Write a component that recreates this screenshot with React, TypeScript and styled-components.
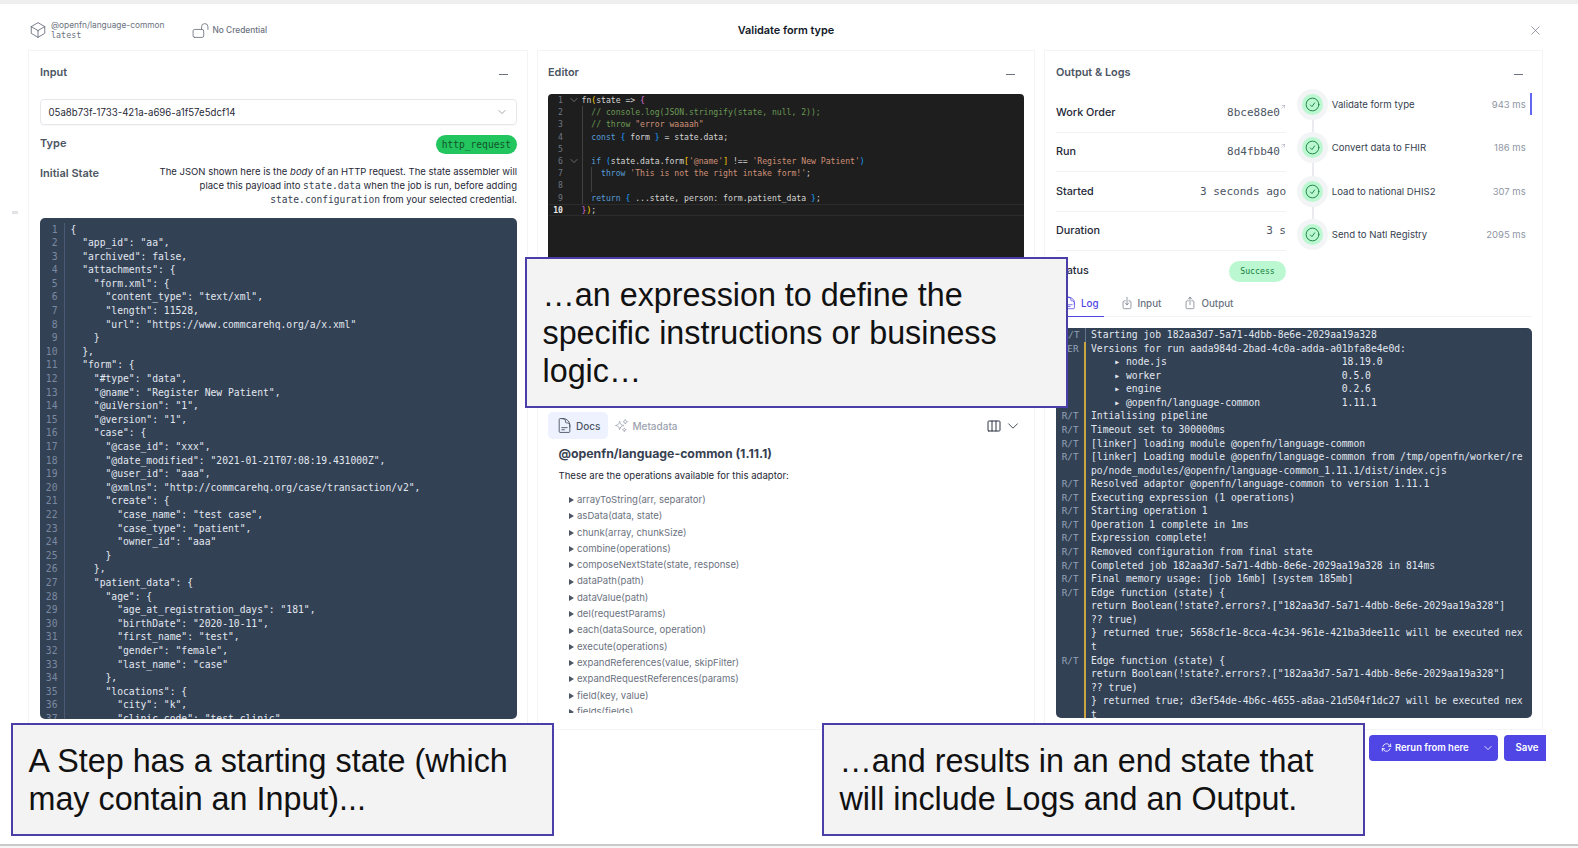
import React from "react";
import styled, { createGlobalStyle } from "styled-components";

const Global = createGlobalStyle`
  html, body { margin: 0; padding: 0; background: #fff; }
  body { font-family: Inter, "Noto Sans", sans-serif; color: #374151; overflow: hidden; }
  * { box-sizing: border-box; }
`;

const MONO = `"DejaVu Sans Mono", "Liberation Mono", monospace`;

const Page = styled.div`
  position: relative;
  width: 1578px;
  height: 848px;
  overflow: hidden;
  display: flex;
  flex-direction: column;
  background: #fff;
`;
const TopStrip = styled.div`
  height: 4px;
  flex: none;
  background: #eeeeee;
`;
const Header = styled.header`
  height: 46px;
  flex: none;
  display: grid;
  grid-template-columns: 1fr auto 1fr;
  align-items: center;
  padding: 6px 35px 0 29px;
`;
const HeaderLeft = styled.div`
  display: flex;
  align-items: center;
  gap: 27px;
`;
const HeaderGroup = styled.div`
  display: flex;
  align-items: center;
  gap: 4px;
  color: #6b7280;
`;
const AdaptorName = styled.div`
  font-size: 8.35px;
  line-height: 10px;
  color: #6b7280;
`;
const AdaptorVersion = styled.div`
  font-family: ${MONO};
  font-size: 8.4px;
  line-height: 10px;
  color: #6b7280;
`;
const CredentialText = styled.span`
  font-size: 8.35px;
  font-weight: 500;
  color: #6b7280;
`;
const Title = styled.h1`
  margin: 0;
  font-size: 10.9px;
  font-weight: 600;
  color: #111827;
`;
const CloseWrap = styled.div`
  justify-self: end;
  display: flex;
  color: #6b7280;
`;
const Svg = styled.svg`
  flex: none;
  display: block;
`;
const Hero = ({ d, size = 14, sw = 1.5 }: { d: string; size?: number; sw?: number }) => (
  <Svg width={size} height={size} viewBox="0 0 24 24" fill="none" stroke="currentColor" strokeWidth={sw} strokeLinecap="round" strokeLinejoin="round">
    <path d={d} />
  </Svg>
);
const I = {
  cube: "m21 7.5-9-5.25L3 7.5m18 0-9 5.25m9-5.25v9l-9 5.25M3 7.5l9 5.25M3 7.5v9l9 5.25m0-9v9",
  lock: "M13.5 10.5V6.75a4.5 4.5 0 1 1 9 0v3.75M3.75 21.75h10.5a2.25 2.25 0 0 0 2.25-2.25v-6.75a2.25 2.25 0 0 0-2.25-2.25H3.75a2.25 2.25 0 0 0-2.25 2.25v6.75a2.25 2.25 0 0 0 2.25 2.25Z",
  x: "M6 18 18 6M6 6l12 12",
  chev: "m19.5 8.25-7.5 7.5-7.5-7.5",
  doc: "M19.5 14.25v-2.625a3.375 3.375 0 0 0-3.375-3.375h-1.5A1.125 1.125 0 0 1 13.5 7.125v-1.5a3.375 3.375 0 0 0-3.375-3.375H8.25m0 12.75h7.5m-7.5 3H12M10.5 2.25H5.625c-.621 0-1.125.504-1.125 1.125v17.25c0 .621.504 1.125 1.125 1.125h12.75c.621 0 1.125-.504 1.125-1.125V11.25a9 9 0 0 0-9-9Z",
  sparkles: "M9.813 15.904 9 18.75l-.813-2.846a4.5 4.5 0 0 0-3.09-3.09L2.25 12l2.846-.813a4.5 4.5 0 0 0 3.09-3.09L9 5.25l.813 2.846a4.5 4.5 0 0 0 3.09 3.09L15.75 12l-2.846.813a4.5 4.5 0 0 0-3.09 3.09ZM18.259 8.715 18 9.75l-.259-1.035a3.375 3.375 0 0 0-2.455-2.456L14.25 6l1.036-.259a3.375 3.375 0 0 0 2.455-2.456L18 2.25l.259 1.035a3.375 3.375 0 0 0 2.456 2.456L21.75 6l-1.035.259a3.375 3.375 0 0 0-2.456 2.456ZM16.894 20.567 16.5 21.75l-.394-1.183a2.25 2.25 0 0 0-1.423-1.423L13.5 18.75l1.183-.394a2.25 2.25 0 0 0 1.423-1.423l.394-1.183.394 1.183a2.25 2.25 0 0 0 1.423 1.423l1.183.394-1.183.394a2.25 2.25 0 0 0-1.423 1.423Z",
  cols: "M9 4.5v15m6-15v15m-10.875 0h15.75c.621 0 1.125-.504 1.125-1.125V5.625c0-.621-.504-1.125-1.125-1.125H4.125C3.504 4.5 3 5.004 3 5.625v12.75c0 .621.504 1.125 1.125 1.125Z",
  check: "M9 12.75 11.25 15 15 9.75M21 12a9 9 0 1 1-18 0 9 9 0 0 1 18 0Z",
  refresh: "M16.023 9.348h4.992v-.001M2.985 19.644v-4.992m0 0h4.992m-4.993 0 3.181 3.183a8.25 8.25 0 0 0 13.803-3.7M4.031 9.865a8.25 8.25 0 0 1 13.803-3.7l3.181 3.182m0-4.991v4.99",
  into: "M9 8.25H7.5a2.25 2.25 0 0 0-2.25 2.25v9a2.25 2.25 0 0 0 2.25 2.25h9a2.25 2.25 0 0 0 2.25-2.25v-9a2.25 2.25 0 0 0-2.25-2.25H15M9 12l3 3m0 0 3-3m-3 3V2.25",
  out: "M9 8.25H7.5a2.25 2.25 0 0 0-2.25 2.25v9a2.25 2.25 0 0 0 2.25 2.25h9a2.25 2.25 0 0 0 2.25-2.25v-9a2.25 2.25 0 0 0-2.25-2.25H15m0-3-3-3m0 0-3 3m3-3V15",
  ext: "M6 18 18 6m0 0H8m10 0v10",
};

const Columns = styled.main`
  height: 679.5px;
  flex: none;
  margin: 0 35px 0 28px;
  display: grid;
  grid-template-columns: 500px 498px 499px;
  column-gap: 9px;
`;
const Panel = styled.section<{ $pl: number }>`
  min-width: 0;
  display: flex;
  flex-direction: column;
  border: 1px solid #f3f4f6;
  padding: 0 10px 0 ${(p) => p.$pl}px;
`;
const PanelHead = styled.div`
  height: 42px;
  flex: none;
  display: flex;
  align-items: center;
  justify-content: space-between;
  padding-right: 9px;
`;
const PanelTitle = styled.h2`
  margin: 0;
  font-size: 10.9px;
  font-weight: 600;
  color: #4b5563;
`;
const Collapse = styled.span`
  width: 9.5px;
  height: 1.3px;
  margin-top: 5px;
  background: #6b7280;
`;

const Select = styled.div`
  height: 26px;
  margin-top: 6px;
  flex: none;
  display: flex;
  align-items: center;
  justify-content: space-between;
  padding: 0 9px 0 7.5px;
  border: 1px solid #e5e7eb;
  border-radius: 4px;
  font-size: 9.65px;
  color: #1f2937;
  box-shadow: 0 1px 1px rgba(0, 0, 0, 0.03);
`;
const SelectChevron = styled.span`
  display: flex;
  color: #6b7280;
`;
const TypeRow = styled.div`
  margin-top: 10px;
  height: 19px;
  flex: none;
  display: flex;
  align-items: center;
  justify-content: space-between;
`;
const FieldLabel = styled.span`
  font-size: 11px;
  font-weight: 600;
  color: #4b5563;
`;
const TypeLabel = styled(FieldLabel)`
  margin-top: -3px;
`;
const TypePill = styled.span`
  height: 19px;
  padding: 0 6px;
  display: flex;
  align-items: center;
  border-radius: 10px;
  background: #22c55e;
  font-family: ${MONO};
  font-size: 9.6px;
  color: #14532d;
`;
const StateRow = styled.div`
  margin-top: 11px;
  flex: none;
  display: grid;
  grid-template-columns: 80px 1fr;
`;
const StateLabel = styled(FieldLabel)`
  line-height: 16px;
`;
const StateText = styled.p`
  margin: 0;
  text-align: right;
  white-space: nowrap;
  font-size: 9.5px;
  line-height: 14px;
  color: #1f2937;
`;
const InlineCode = styled.code`
  font-family: ${MONO};
  font-size: 9.6px;
  color: #374151;
`;

const JsonBlock = styled.div`
  margin-top: 11px;
  height: 500.5px;
  flex: none;
  overflow: hidden;
  border-radius: 5px;
  background: #334155;
  padding-top: 4.5px;
  font-family: ${MONO};
  font-size: 9.7px;
  color: #e2e8f0;
`;
const JsonRow = styled.div`
  display: flex;
  height: 13.6px;
  line-height: 13.6px;
`;
const JsonNum = styled.span`
  width: 24.5px;
  flex: none;
  text-align: right;
  padding-right: 6px;
  color: #7b8aa0;
  border-right: 1px solid #4b5b73;
`;
const JsonCode = styled.span`
  padding-left: 6px;
  white-space: pre;
`;

const EditorBlock = styled.div`
  margin-top: 1px;
  height: 306px;
  flex: none;
  overflow: hidden;
  border-radius: 4px 4px 0 0;
  background: #1e1e1e;
  font-family: ${MONO};
  font-size: 8.12px;
  color: #d4d4d4;
`;
const EdRow = styled.div<{ $current?: boolean }>`
  display: flex;
  height: 12.2px;
  line-height: 12.2px;
  box-shadow: ${(p) => (p.$current ? "inset 0 1px #2c2c2c, inset 0 -1px #2c2c2c" : "none")};
`;
const EdNum = styled.span<{ $current?: boolean }>`
  width: 15px;
  flex: none;
  text-align: right;
  color: ${(p) => (p.$current ? "#e8e8e8" : "#6e7681")};
  font-weight: ${(p) => (p.$current ? 700 : 400)};
`;
const EdFold = styled.span`
  width: 18.5px;
  flex: none;
  display: flex;
  align-items: center;
  padding-left: 6px;
  color: #9a9a9a;
`;
const EdCode = styled.span<{ $guides: number }>`
  flex: 1;
  white-space: pre;
  background-image: ${(p) =>
    p.$guides === 2
      ? "linear-gradient(#404040,#404040), linear-gradient(#404040,#404040)"
      : p.$guides === 1
        ? "linear-gradient(#404040,#404040)"
        : "none"};
  background-size: 1px 100%;
  background-repeat: no-repeat;
  background-position: 0 0, 9.8px 0;
`;
const Tok = styled.span<{ $c: string }>`
  color: ${(p) => p.$c};
`;

const DocTabs = styled.div`
  margin-top: 12px;
  height: 27px;
  flex: none;
  display: flex;
  align-items: center;
  gap: 6px;
  padding-right: 4px;
`;
const DocTab = styled.div<{ $active?: boolean }>`
  height: 27px;
  display: flex;
  align-items: center;
  gap: 3px;
  padding: ${(p) => (p.$active ? "0 8px 0 8px" : "0")};
  border-radius: 5px;
  background: ${(p) => (p.$active ? "#eef2ff" : "transparent")};
  font-size: 10px;
  font-weight: 500;
  color: ${(p) => (p.$active ? "#4b5563" : "#9ca3af")};
`;
const DocTools = styled.div`
  margin-left: auto;
  display: flex;
  align-items: center;
  gap: 4px;
  color: #1f2937;
`;
const DocScroll = styled.div`
  height: 274px;
  flex: none;
  overflow: hidden;
  padding: 7px 0 0 10.5px;
`;
const DocHeading = styled.h3`
  margin: 0;
  font-size: 12.3px;
  line-height: 16px;
  font-weight: 700;
  color: #374151;
`;
const DocLead = styled.p`
  margin: 7px 0 0;
  font-size: 9.6px;
  line-height: 14px;
  color: #1f2937;
`;
const DocList = styled.ul`
  list-style: none;
  margin: 9px 0 0;
  padding: 0 0 0 10.5px;
`;
const DocItem = styled.li`
  height: 16.3px;
  line-height: 16.3px;
  display: flex;
  align-items: center;
  gap: 3px;
  font-size: 9.55px;
  color: #6b7280;
  &::before {
    content: "";
    width: 0;
    height: 0;
    border-left: 5.5px solid #4b5563;
    border-top: 3px solid transparent;
    border-bottom: 3px solid transparent;
  }
`;

const OutputTop = styled.div`
  flex: none;
  display: grid;
  grid-template-columns: 230px 1fr;
  column-gap: 11.3px;
`;
const StatRow = styled.div<{ $last?: boolean }>`
  height: 39.5px;
  display: flex;
  align-items: center;
  justify-content: space-between;
  border-bottom: ${(p) => (p.$last ? "none" : "1px solid #f1f2f4")};
`;
const StatLabel = styled.span`
  font-size: 10.8px;
  font-weight: 500;
  color: #1f2937;
`;
const StatValue = styled.span`
  display: flex;
  font-family: ${MONO};
  font-size: 11px;
  color: #4b5563;
`;
const ExtMark = styled.span`
  display: flex;
  margin: -2px 0 0 0;
  color: #9ca3af;
`;
const StatusPill = styled.span`
  width: 57px;
  height: 21px;
  margin-top: 1px;
  display: flex;
  align-items: center;
  justify-content: center;
  border-radius: 11px;
  background: #bbf7d0;
  font-family: ${MONO};
  font-size: 8.2px;
  font-weight: 400;
  color: #15803d;
`;
const Steps = styled.div`
  margin-top: -4.5px;
  display: flex;
  flex-direction: column;
`;
const Step = styled.div`
  height: 31px;
  display: flex;
  align-items: center;
`;
const StepOuter = styled.span`
  width: 31px;
  height: 31px;
  flex: none;
  display: flex;
  align-items: center;
  justify-content: center;
  border-radius: 50%;
  background: #f3f4f6;
`;
const StepInner = styled.span`
  width: 21px;
  height: 21px;
  display: flex;
  align-items: center;
  justify-content: center;
  border-radius: 50%;
  background: #bbf7d0;
  color: #15803d;
`;
const StepName = styled.span`
  margin-left: 3.5px;
  flex: 1;
  font-size: 9.6px;
  color: #374151;
`;
const StepTime = styled.span`
  font-size: 9.5px;
  color: #8f96a3;
`;
const StepBar = styled.span<{ $on?: boolean }>`
  width: 2.3px;
  height: 22px;
  margin-left: 4px;
  background: ${(p) => (p.$on ? "#6366f1" : "transparent")};
`;
const StepLink = styled.span`
  width: 2px;
  height: 12.5px;
  margin-left: 14.5px;
  background: #e9ebee;
`;
const LogTabs = styled.div`
  height: 26.5px;
  flex: none;
  display: flex;
  align-items: stretch;
  gap: 12px;
  padding-left: 2px;
  border-bottom: 1px solid #f3f4f6;
`;
const LogTab = styled.div<{ $active?: boolean }>`
  display: flex;
  align-items: center;
  gap: 4px;
  padding: 0 5px;
  font-size: 9.8px;
  font-weight: 500;
  color: ${(p) => (p.$active ? "#4f46e5" : "#6b7280")};
  border-bottom: 1.5px solid ${(p) => (p.$active ? "#4f46e5" : "transparent")};
  margin-bottom: -1px;
  margin-right: ${(p) => (p.$active ? "-1px" : "0")};
`;
const LogBlock = styled.div`
  margin-top: 11px;
  height: 390px;
  flex: none;
  overflow: hidden;
  border-radius: 5px;
  background: #334155;
  font-family: ${MONO};
  font-size: 9.7px;
  color: #e2e8f0;
`;
const LogRow = styled.div`
  display: flex;
  height: 13.57px;
  line-height: 13.57px;
`;
const LogSource = styled.span<{ $first?: boolean }>`
  width: 29.5px;
  flex: none;
  text-align: right;
  padding-right: 5px;
  font-size: 9.3px;
  color: #94a3b8;
  border-right: ${(p) => (p.$first ? "1px solid #64748b" : "2px solid #c9a63f")};
`;
const LogText = styled.span`
  padding-left: 5.5px;
  white-space: pre;
`;

const Footer = styled.footer`
  flex: 1;
  display: flex;
  justify-content: flex-end;
  align-items: flex-start;
  gap: 6px;
  padding: 5.5px 32px 0 0;
`;
const RerunButton = styled.div`
  width: 129px;
  height: 25.5px;
  display: flex;
  align-items: center;
  padding: 0 3px 0 12px;
  gap: 3px;
  border-radius: 4px;
  background: #4f46e5;
  color: #fff;
  font-size: 9.45px;
  font-weight: 600;
`;
const RerunChevron = styled.span`
  margin-left: auto;
  padding-right: 2px;
  display: flex;
`;
const SaveButton = styled.div`
  width: 42px;
  height: 25.5px;
  display: flex;
  align-items: center;
  padding-left: 11.5px;
  border-radius: 4px 0 0 4px;
  background: #4f46e5;
  color: #fff;
  font-size: 9.7px;
  font-weight: 600;
`;
const BottomRule = styled.div`
  position: absolute;
  left: 0;
  right: 0;
  top: 844px;
  height: 4px;
  border-top: 2px solid #c9c9c9;
  background: #f6f6f6;
`;
const DragTick = styled.span`
  position: absolute;
  left: 12px;
  top: 211px;
  width: 6px;
  height: 2.5px;
  background: #e2e3e6;
`;
const Callout = styled.div<{ $left: number; $top: number; $height: number }>`
  position: absolute;
  left: ${(p) => p.$left}px;
  top: ${(p) => p.$top}px;
  width: 543px;
  height: ${(p) => p.$height}px;
  padding: 17px 10px 0 15.5px;
  border: 2px solid #4a3fa8;
  background: #f3f3f4;
  font-family: "Liberation Sans", Arial, sans-serif;
  font-size: 32.3px;
  line-height: 38px;
  color: #111;
`;

const jsonLines = `{
  "app_id": "aa",
  "archived": false,
  "attachments": {
    "form.xml": {
      "content_type": "text/xml",
      "length": 11528,
      "url": "https://www.commcarehq.org/a/x.xml"
    }
  },
  "form": {
    "#type": "data",
    "@name": "Register New Patient",
    "@uiVersion": "1",
    "@version": "1",
    "case": {
      "@case_id": "xxx",
      "@date_modified": "2021-01-21T07:08:19.431000Z",
      "@user_id": "aaa",
      "@xmlns": "http://commcarehq.org/case/transaction/v2",
      "create": {
        "case_name": "test case",
        "case_type": "patient",
        "owner_id": "aaa"
      }
    },
    "patient_data": {
      "age": {
        "age_at_registration_days": "181",
        "birthDate": "2020-10-11",
        "first_name": "test",
        "gender": "female",
        "last_name": "case"
      },
      "locations": {
        "city": "k",
        "clinic_code": "test clinic",`.split("\n");

const C = { kw: "#569cd6", str: "#ce9178", com: "#6a9955", gold: "#ffd700", pur: "#da70d6", blue: "#179fff" };
type Seg = string | [string, string];
const editorLines: { segs: Seg[]; guides: number; fold?: boolean }[] = [
  { fold: true, guides: 0, segs: ["fn", [C.gold, "("], "state => ", [C.pur, "{"]] },
  { guides: 1, segs: [[C.com, "  // console.log(JSON.stringify(state, null, 2));"]] },
  { guides: 1, segs: [[C.com, "  // throw "], [C.str, '"error waaaah"']] },
  { guides: 1, segs: ["  ", [C.kw, "const"], " ", [C.blue, "{"], " form ", [C.blue, "}"], " = state.data;"] },
  { guides: 1, segs: [""] },
  { fold: true, guides: 1, segs: ["  ", [C.kw, "if"], " ", [C.blue, "("], "state.data.form", [C.gold, "["], [C.str, "'@name'"], [C.gold, "]"], " !== ", [C.str, "'Register New Patient'"], [C.blue, ")"]] },
  { guides: 2, segs: ["    ", [C.kw, "throw"], " ", [C.str, "'This is not the right intake form!'"], ";"] },
  { guides: 2, segs: [""] },
  { guides: 1, segs: ["  ", [C.kw, "return"], " ", [C.blue, "{"], " ...state, person: form.patient_data ", [C.blue, "}"], ";"] },
  { guides: 0, segs: [[C.pur, "}"], [C.gold, ")"], ";"] },
];

const docItems = [
  "arrayToString(arr, separator)",
  "asData(data, state)",
  "chunk(array, chunkSize)",
  "combine(operations)",
  "composeNextState(state, response)",
  "dataPath(path)",
  "dataValue(path)",
  "del(requestParams)",
  "each(dataSource, operation)",
  "execute(operations)",
  "expandReferences(value, skipFilter)",
  "expandRequestReferences(params)",
  "field(key, value)",
  "fields(fields)",
];

const steps = [
  ["Validate form type", "943 ms"],
  ["Convert data to FHIR", "186 ms"],
  ["Load to national DHIS2", "307 ms"],
  ["Send to Natl Registry", "2095 ms"],
];

const logLines: [string, string][] = [
  ["R/T", "Starting job 182aa3d7-5a71-4dbb-8e6e-2029aa19a328"],
  ["VER", "Versions for run aada984d-2bad-4c0a-adda-a01bfa8e4e0d:"],
  ["", "    ▸ node.js                              18.19.0"],
  ["", "    ▸ worker                               0.5.0"],
  ["", "    ▸ engine                               0.2.6"],
  ["", "    ▸ @openfn/language-common              1.11.1"],
  ["R/T", "Intialising pipeline"],
  ["R/T", "Timeout set to 300000ms"],
  ["R/T", "[linker] loading module @openfn/language-common"],
  ["R/T", "[linker] Loading module @openfn/language-common from /tmp/openfn/worker/re"],
  ["", "po/node_modules/@openfn/language-common_1.11.1/dist/index.cjs"],
  ["R/T", "Resolved adaptor @openfn/language-common to version 1.11.1"],
  ["R/T", "Executing expression (1 operations)"],
  ["R/T", "Starting operation 1"],
  ["R/T", "Operation 1 complete in 1ms"],
  ["R/T", "Expression complete!"],
  ["R/T", "Removed configuration from final state"],
  ["R/T", "Completed job 182aa3d7-5a71-4dbb-8e6e-2029aa19a328 in 814ms"],
  ["R/T", "Final memory usage: [job 16mb] [system 185mb]"],
  ["R/T", "Edge function (state) {"],
  ["", 'return Boolean(!state?.errors?.["182aa3d7-5a71-4dbb-8e6e-2029aa19a328"]'],
  ["", "?? true)"],
  ["", "} returned true; 5658cf1e-8cca-4c34-961e-421ba3dee11c will be executed nex"],
  ["", "t"],
  ["R/T", "Edge function (state) {"],
  ["", 'return Boolean(!state?.errors?.["182aa3d7-5a71-4dbb-8e6e-2029aa19a328"]'],
  ["", "?? true)"],
  ["", "} returned true; d3ef54de-4b6c-4655-a8aa-21d504f1dc27 will be executed nex"],
  ["", "t"],
];

const Ext = () => (
  <ExtMark>
    <Hero d={I.ext} size={6} sw={2} />
  </ExtMark>
);

export default function App() {
  return (
    <Page>
      <Global />
      <TopStrip />
      <Header>
        <HeaderLeft>
          <HeaderGroup>
            <Hero d={I.cube} size={18} sw={1.2} />
            <div>
              <AdaptorName>@openfn/language-common</AdaptorName>
              <AdaptorVersion>latest</AdaptorVersion>
            </div>
          </HeaderGroup>
          <HeaderGroup>
            <Hero d={I.lock} size={17} sw={1.2} />
            <CredentialText>No Credential</CredentialText>
          </HeaderGroup>
        </HeaderLeft>
        <Title>Validate form type</Title>
        <CloseWrap>
          <Hero d={I.x} size={15} sw={1.1} />
        </CloseWrap>
      </Header>

      <Columns>
        <Panel $pl={11}>
          <PanelHead>
            <PanelTitle>Input</PanelTitle>
            <Collapse />
          </PanelHead>
          <Select>
            05a8b73f-1733-421a-a696-a1f57e5dcf14
            <SelectChevron>
              <Hero d={I.chev} size={10} />
            </SelectChevron>
          </Select>
          <TypeRow>
            <TypeLabel>Type</TypeLabel>
            <TypePill>http_request</TypePill>
          </TypeRow>
          <StateRow>
            <StateLabel>Initial State</StateLabel>
            <StateText>
              The JSON shown here is the <em>body</em> of an HTTP request. The state assembler will
              <br />
              place this payload into <InlineCode>state.data</InlineCode> when the job is run, before adding
              <br />
              <InlineCode>state.configuration</InlineCode> from your selected credential.
            </StateText>
          </StateRow>
          <JsonBlock>
            {jsonLines.map((line, i) => (
              <JsonRow key={i}>
                <JsonNum>{i + 1}</JsonNum>
                <JsonCode>{line}</JsonCode>
              </JsonRow>
            ))}
          </JsonBlock>
        </Panel>

        <Panel $pl={10}>
          <PanelHead>
            <PanelTitle>Editor</PanelTitle>
            <Collapse />
          </PanelHead>
          <EditorBlock>
            {editorLines.map((line, i) => (
              <EdRow key={i} $current={i === 9}>
                <EdNum $current={i === 9}>{i + 1}</EdNum>
                <EdFold>{line.fold && <Hero d={I.chev} size={10} />}</EdFold>
                <EdCode $guides={line.guides}>
                  {line.segs.map((s, j) =>
                    typeof s === "string" ? s : <Tok key={j} $c={s[0]}>{s[1]}</Tok>
                  )}
                </EdCode>
              </EdRow>
            ))}
          </EditorBlock>
          <DocTabs>
            <DocTab $active>
              <Hero d={I.doc} size={17} sw={1.3} />
              Docs
            </DocTab>
            <DocTab>
              <Hero d={I.sparkles} size={15} sw={1.2} />
              Metadata
            </DocTab>
            <DocTools>
              <Hero d={I.cols} size={16} sw={1.4} />
              <Hero d={I.chev} size={14} sw={1.4} />
            </DocTools>
          </DocTabs>
          <DocScroll>
            <DocHeading>@openfn/language-common (1.11.1)</DocHeading>
            <DocLead>These are the operations available for this adaptor:</DocLead>
            <DocList>
              {docItems.map((d) => (
                <DocItem key={d}>{d}</DocItem>
              ))}
            </DocList>
          </DocScroll>
        </Panel>

        <Panel $pl={11}>
          <PanelHead>
            <PanelTitle>Output &amp; Logs</PanelTitle>
            <Collapse />
          </PanelHead>
          <OutputTop>
            <div>
              <StatRow>
                <StatLabel>Work Order</StatLabel>
                <StatValue>8bce88e0<Ext /></StatValue>
              </StatRow>
              <StatRow>
                <StatLabel>Run</StatLabel>
                <StatValue>8d4fbb40<Ext /></StatValue>
              </StatRow>
              <StatRow>
                <StatLabel>Started</StatLabel>
                <StatValue>3 seconds ago</StatValue>
              </StatRow>
              <StatRow>
                <StatLabel>Duration</StatLabel>
                <StatValue>3 s</StatValue>
              </StatRow>
              <StatRow $last>
                <StatLabel>Status</StatLabel>
                <StatusPill>Success</StatusPill>
              </StatRow>
            </div>
            <Steps>
              {steps.map(([name, time], i) => (
                <React.Fragment key={name}>
                  {i > 0 && <StepLink />}
                  <Step>
                    <StepOuter>
                      <StepInner>
                        <Hero d={I.check} size={17} sw={1.3} />
                      </StepInner>
                    </StepOuter>
                    <StepName>{name}</StepName>
                    <StepTime>{time}</StepTime>
                    <StepBar $on={i === 0} />
                  </Step>
                </React.Fragment>
              ))}
            </Steps>
          </OutputTop>
          <LogTabs>
            <LogTab $active>
              <Hero d={I.doc} size={14} sw={1.3} />
              Log
            </LogTab>
            <LogTab>
              <Hero d={I.into} size={14} sw={1.2} />
              Input
            </LogTab>
            <LogTab>
              <Hero d={I.out} size={14} sw={1.2} />
              Output
            </LogTab>
          </LogTabs>
          <LogBlock>
            {logLines.map(([src, text], i) => (
              <LogRow key={i}>
                <LogSource $first={i === 0}>{src}</LogSource>
                <LogText>{text}</LogText>
              </LogRow>
            ))}
          </LogBlock>
        </Panel>
      </Columns>

      <Footer>
        <RerunButton>
          <Hero d={I.refresh} size={11} sw={1.8} />
          Rerun from here
          <RerunChevron>
            <Hero d={I.chev} size={10} sw={2} />
          </RerunChevron>
        </RerunButton>
        <SaveButton>Save</SaveButton>
      </Footer>

      <DragTick />
      <BottomRule />

      <Callout $left={525} $top={257} $height={151}>
        …an expression to define the
        <br />
        specific instructions or business
        <br />
        logic…
      </Callout>
      <Callout $left={11} $top={722.8} $height={113}>
        A Step has a starting state (which
        <br />
        may contain an Input)...
      </Callout>
      <Callout $left={822} $top={722.8} $height={113}>
        …and results in an end state that
        <br />
        will include Logs and an Output.
      </Callout>
    </Page>
  );
}
